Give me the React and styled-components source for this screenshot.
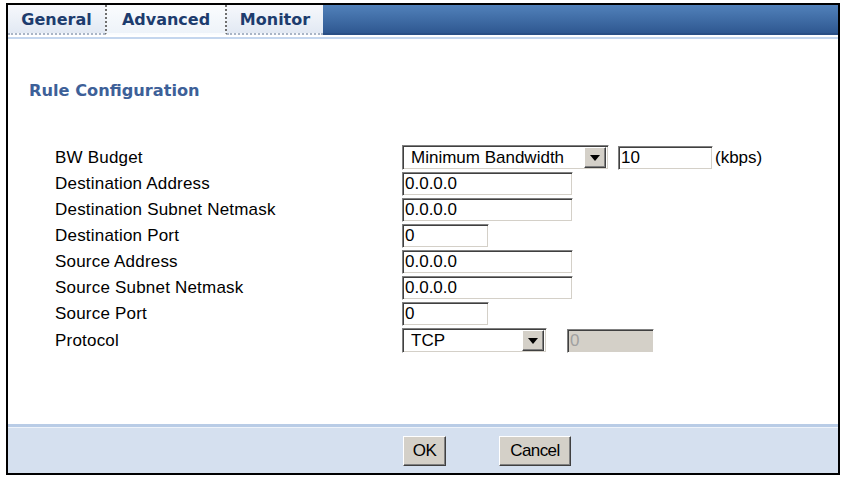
import styled, { createGlobalStyle } from "styled-components";

const GlobalStyle = createGlobalStyle`
    body {
        margin: 0;
        background: #ffffff;
        font-family: "Liberation Sans", Arial, sans-serif;
    }
`

const tabs = [
    { label: "General", width: 97 },
    { label: "Advanced", width: 122, active: true },
    { label: "Monitor", width: 96 },
]

const fields = [
    { label: "Destination Address", value: "0.0.0.0", width: 171 },
    { label: "Destination Subnet Netmask", value: "0.0.0.0", width: 171 },
    { label: "Destination Port", value: "0", width: 87 },
    { label: "Source Address", value: "0.0.0.0", width: 171 },
    { label: "Source Subnet Netmask", value: "0.0.0.0", width: 171 },
    { label: "Source Port", value: "0", width: 87 },
]

const Arrow = () => (
    <svg width="10" height="6" viewBox="0 0 10 6">
        <path d="M0 0 H10 L5 6 Z" fill="#000" />
    </svg>
)

const Select = ({ value, width }) => (
    <SelectBox $width={width}>
        <SelectText>{value}</SelectText>
        <ArrowButton>
            <Arrow />
        </ArrowButton>
    </SelectBox>
)

const App = () => {
    return (
        <>
            <GlobalStyle />
            <Page>
                <Frame>
                    <TabBar>
                        {tabs.map((tab) => (
                            <Tab key={tab.label} $width={tab.width} $active={tab.active}>
                                {tab.label}
                            </Tab>
                        ))}
                        <TabFill />
                    </TabBar>
                    <TabUnderline />

                    <Heading>Rule Configuration</Heading>

                    <Form>
                        <Label>BW Budget</Label>
                        <Controls>
                            <Select value="Minimum Bandwidth" width={207} />
                            <TextInput $width={95} $gap={9} defaultValue="10" />
                            <Unit>(kbps)</Unit>
                        </Controls>

                        {fields.map((field) => (
                            <Row key={field.label}>
                                <Label>{field.label}</Label>
                                <Controls>
                                    <TextInput $width={field.width} defaultValue={field.value} />
                                </Controls>
                            </Row>
                        ))}

                        <Label>Protocol</Label>
                        <Controls>
                            <Select value="TCP" width={145} />
                            <TextInput $width={87} $gap={20} disabled defaultValue="0" />
                        </Controls>
                    </Form>

                    <Footer>
                        <Button $width={43}>OK</Button>
                        <Button $width={72}>Cancel</Button>
                    </Footer>
                </Frame>
            </Page>
        </>
    )
}

const Page = styled.div`
    padding: 3px 0 0 6px;
`

const Frame = styled.div`
    width: 830px;
    height: 468px;
    border: 2px solid #000;
    display: flex;
    flex-direction: column;
    background: #ffffff;
`

const TabBar = styled.div`
    display: flex;
    height: 30px;
`

const Tab = styled.div`
    width: ${(p) => p.$width}px;
    box-sizing: border-box;
    display: flex;
    align-items: center;
    justify-content: center;
    font-family: "DejaVu Sans", Verdana, sans-serif;
    font-weight: bold;
    font-size: 16px;
    color: #1d3c6e;
    border-bottom: ${(p) => (p.$active ? "2px solid transparent" : "2px dotted #a9b5c6")};
    border-left: ${(p) => (p.$active ? "2px dotted #6f6f6f" : "none")};
    border-right: ${(p) => (p.$active ? "2px dotted #6f6f6f" : "none")};
    background: ${(p) => (p.$active ? "linear-gradient(#fafcfe, #eef3f9)" : "linear-gradient(#f6f8fc, #e2e9f3)")};
`

const TabFill = styled.div`
    flex: 1;
    background: linear-gradient(#5181ba, #2f5891);
    border-bottom: 2px solid #2a4f85;
`

const TabUnderline = styled.div`
    height: 2px;
    margin-top: 2px;
    background: #c4d6ee;
`

const Heading = styled.div`
    margin: 43px 0 0 21px;
    font-family: "DejaVu Sans", Verdana, sans-serif;
    font-weight: bold;
    font-size: 16.2px;
    line-height: 18px;
    color: #3d6098;
`

const Form = styled.div`
    display: grid;
    grid-template-columns: 347px auto;
    row-gap: 2px;
    align-items: center;
    margin: 45px 0 0 47px;
`

const Row = styled.div`
    display: contents;
`

const Label = styled.div`
    font-size: 17px;
    letter-spacing: 0.2px;
    color: #000;
`

const Controls = styled.div`
    display: flex;
    align-items: center;
`

const insetBorder = `
    box-sizing: border-box;
    border-style: solid;
    border-width: 1px;
    border-color: #808080 #ffffff #ffffff #808080;
    box-shadow: inset 1px 1px #404040, inset -1px -1px #d4d0c8;
`

const SelectBox = styled.div`
    ${insetBorder}
    width: ${(p) => p.$width}px;
    height: 25px;
    display: flex;
    align-items: center;
    justify-content: space-between;
    padding: 2px 2px 2px 8px;
    background: #ffffff;
`

const SelectText = styled.span`
    font-size: 17px;
    color: #000;
`

const ArrowButton = styled.span`
    width: 22px;
    height: 21px;
    box-sizing: border-box;
    display: flex;
    align-items: center;
    justify-content: center;
    background: #d4d0c8;
    border-style: solid;
    border-width: 1px;
    border-color: #ffffff #404040 #404040 #ffffff;
    box-shadow: inset -1px -1px #808080;
`

const TextInput = styled.input`
    ${insetBorder}
    width: ${(p) => p.$width}px;
    height: 24px;
    margin: 0 0 0 ${(p) => p.$gap || 0}px;
    padding: 0 2px;
    font-family: "Liberation Sans", Arial, sans-serif;
    font-size: 17px;
    color: #000;
    background: #ffffff;
    outline: none;

    &:disabled {
        background: #d4d0c8;
        color: #a0a0a0;
    }
`

const Unit = styled.span`
    margin-left: 2px;
    font-size: 17px;
    color: #000;
`

const Footer = styled.div`
    margin-top: auto;
    height: 46px;
    display: flex;
    align-items: center;
    gap: 53px;
    padding-left: 395px;
    background: #d5e0ef;
    border-top: 3px solid #b9cce6;
    box-shadow: inset 0 1px #eef3fa;
`

const Button = styled.button`
    width: ${(p) => p.$width}px;
    height: 30px;
    margin-top: 2px;
    padding: 0;
    font-family: "Liberation Sans", Arial, sans-serif;
    font-size: 17px;
    letter-spacing: -0.6px;
    color: #000;
    background: #d4d0c8;
    border-style: solid;
    border-width: 1px;
    border-color: #ffffff #404040 #404040 #ffffff;
    box-shadow: inset -1px -1px #808080;
`

export default App
